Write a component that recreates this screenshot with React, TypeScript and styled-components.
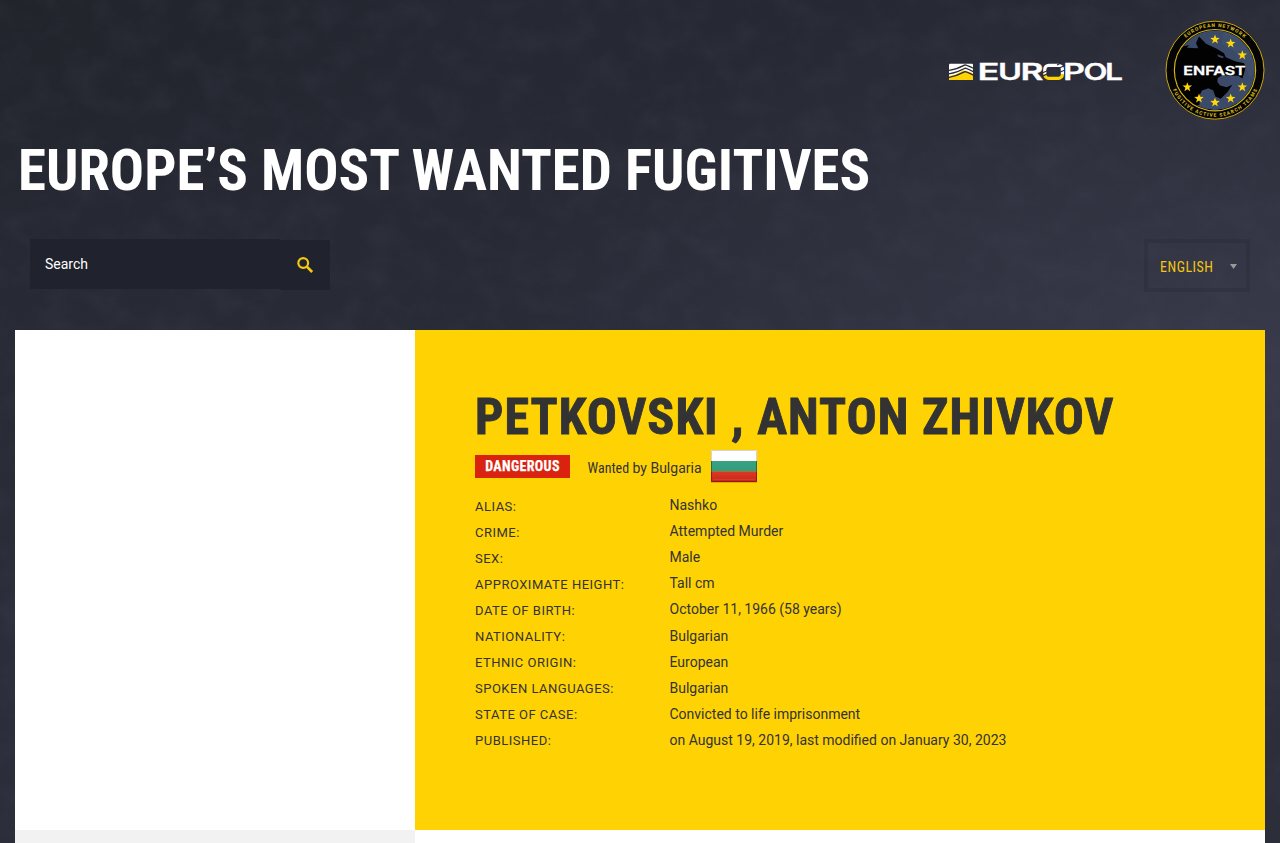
import React from "react";
import styled, { createGlobalStyle } from "styled-components";

const GlobalStyle = createGlobalStyle`
  * { box-sizing: border-box; }
  body { margin: 0; background: #282a36; font-family: Roboto, sans-serif; color: #333; overflow: hidden; }
`;

const condensed = `font-family: "Roboto Condensed", Roboto, sans-serif; font-stretch: 75%;`;

const Page = styled.div`
  position: relative;
  height: 843px;
  overflow: hidden;
  background:
    radial-gradient(ellipse 500px 260px at 0 0, rgba(31, 35, 40, 0.7), transparent),
    radial-gradient(ellipse 800px 400px at 100% 42%, rgba(62, 64, 82, 0.7), transparent),
    linear-gradient(170deg, #252732 0%, #272934 25%, #2b2d3a 60%, #2c2e3a 100%);
`;

const Texture = styled.svg`
  position: absolute;
  inset: 0;
  width: 100%;
  height: 100%;
`;

const Content = styled.div`
  position: relative;
  padding: 0 15px;
`;

const Brands = styled.div`
  display: flex;
  justify-content: flex-end;
  align-items: flex-start;
  gap: 42px;
  height: 141px;
  padding-top: 20px;
`;

const EuropolLogo = styled.svg`
  width: 175px;
  height: 32px;
  margin-top: 36px;
`;

const EnfastLogo = styled.svg`
  width: 100px;
  height: 100px;
`;

const Title = styled.h1`
  ${condensed}
  margin: 0;
  padding-left: 3px;
  height: 98px;
  font-size: 56.9px;
  line-height: 60px;
  font-weight: 700;
  color: #fff;
  white-space: nowrap;
`;

const Controls = styled.div`
  display: flex;
  justify-content: space-between;
  align-items: flex-start;
  height: 91px;
  padding: 0 15px;
`;

const SearchForm = styled.div`
  display: flex;
`;

const SearchField = styled.div`
  width: 250px;
  height: 50px;
  padding-left: 15px;
  background: #20222d;
  color: #fff;
  font-size: 14px;
  line-height: 50px;
`;

const SearchButton = styled.div`
  display: flex;
  align-items: center;
  justify-content: center;
  width: 50px;
  height: 50px;
  margin-top: 1px;
  padding-bottom: 1px;
  background: #20222d;
`;

const Language = styled.div`
  ${condensed}
  display: flex;
  align-items: center;
  justify-content: space-between;
  width: 106px;
  height: 53px;
  padding: 3px 9px 0 12px;
  border: 4px solid rgba(32, 34, 44, 0.25);
  color: #f2c611;
  font-size: 14px;
  letter-spacing: 0.5px;
`;

const Arrow = styled.svg`
  width: 7px;
  height: 5px;
  margin-top: -2px;
  fill: #999;
`;

const Profile = styled.main`
  display: grid;
  grid-template-columns: 400px 850px;
  grid-template-rows: 500px 40px;
`;

const Pane = styled.div<{ $bg: string }>`
  background: ${(p) => p.$bg};
`;

const Details = styled.section`
  padding: 60px;
  background: #ffd204;
`;

const Name = styled.h2`
  ${condensed}
  margin: 0;
  height: 58px;
  font-size: 50px;
  line-height: 55px;
  font-weight: 700;
  letter-spacing: 1.06px;
  -webkit-text-stroke: 0.9px #333;
  white-space: nowrap;
`;

const Status = styled.div`
  display: flex;
  align-items: flex-start;
  height: 45px;
`;

const Danger = styled.span`
  ${condensed}
  width: 95px;
  height: 23px;
  margin-top: 7px;
  background: #d9230f;
  color: #fff;
  font-size: 14px;
  font-weight: 700;
  letter-spacing: 0.36px;
  -webkit-text-stroke: 0.25px #fff;
  line-height: 23px;
  text-align: center;
`;

const WantedBy = styled.span`
  width: 122.5px;
  margin: 12px 0 0 17.5px;
  font-size: 14px;
  line-height: 16px;
  white-space: nowrap;
`;

const Narrow = styled.span`
  ${condensed}
`;

const Flag = styled.svg`
  width: 48px;
  height: 36px;
`;

const Facts = styled.dl`
  display: grid;
  grid-template-columns: 194.5px 1fr;
  grid-auto-rows: 26.12px;
  margin: 0;
`;

const Label = styled.dt`
  padding-top: 1.5px;
  font-size: 13px;
  line-height: 24px;
  letter-spacing: 0.5px;
  text-transform: uppercase;
  white-space: nowrap;
`;

const Value = styled.dd`
  margin: 0;
  font-size: 14px;
  line-height: 24px;
`;

const facts: [string, string][] = [
  ["Alias:", "Nashko"],
  ["Crime:", "Attempted Murder"],
  ["Sex:", "Male"],
  ["Approximate height:", "Tall cm"],
  ["Date of birth:", "October 11, 1966 (58 years)"],
  ["Nationality:", "Bulgarian"],
  ["Ethnic origin:", "European"],
  ["Spoken languages:", "Bulgarian"],
  ["State of case:", "Convicted to life imprisonment"],
  ["Published:", "on August 19, 2019, last modified on January 30, 2023"],
];

const stars = [
  [180, 86], [227, 98], [262, 133], [262, 229], [227, 263], [180, 275], [132, 263], [97, 229],
];

const STAR = "0,-15 3.6,-4.9 14.3,-4.7 5.7,1.9 8.8,12.1 0,6 -8.8,12.1 -5.7,1.9 -14.3,-4.7 -3.6,-4.9";

function Europol() {
  return (
    <EuropolLogo viewBox="0 -6 175 32">
      <defs>
        <linearGradient id="oFill" gradientUnits="userSpaceOnUse" x1="0" y1="2" x2="0" y2="18">
          <stop offset="0.6" stopColor="#fff" />
          <stop offset="0.6" stopColor="#ffd204" />
        </linearGradient>
        <clipPath id="mark"><rect x="1" y="1.7" width="24" height="16.3" rx="1" /></clipPath>
      </defs>
      <g clipPath="url(#mark)">
        <rect x="1" y="1" width="24" height="17" fill="#fff" />
        <path d="M1 14 Q9 12.8 15 8.2 Q19 8.6 25 11.5 V18 H1 Z" fill="#ffd204" />
        <g fill="none" stroke="#282a36" strokeWidth="1.3">
          <path d="M0 8.6 Q8 7.6 17 2.9 Q19 3.2 26 6.6" />
          <path d="M0 12 Q8 11 17 6.2 Q19 6.6 26 10" />
          <path d="M0 15.6 Q8 14.4 17 9.7 Q19 10 26 13.4" />
        </g>
      </g>
      <g fontFamily="Inter, sans-serif" fontWeight="600" fontSize="22.2" fill="#fff" stroke="#fff" strokeWidth="0.3">
        <text x="29.6" y="17.8" textLength="22" lengthAdjust="spacingAndGlyphs">E</text>
        <text x="50" y="17.8" textLength="24" lengthAdjust="spacingAndGlyphs">U</text>
        <text x="72.6" y="17.8" textLength="23" lengthAdjust="spacingAndGlyphs">R</text>
        <text x="115" y="17.8" textLength="22" lengthAdjust="spacingAndGlyphs">P</text>
        <text x="157" y="17.8" textLength="18" lengthAdjust="spacingAndGlyphs">L</text>
        <text x="135.5" y="17.8" textLength="24" lengthAdjust="spacingAndGlyphs">O</text>
      </g>
      <rect x="96.8" y="3.3" width="17.6" height="13.1" rx="4" fill="none" stroke="url(#oFill)" strokeWidth="3.2" />
      <path d="M93 11.5 L101 8 M94 14.5 L101 11 M109 7 L117 3.5 M110 11 L117 8 M109 3 L113 1" stroke="#282a36" strokeWidth="1.1" />
    </EuropolLogo>
  );
}

function Enfast() {
  return (
    <EnfastLogo viewBox="30 28.5 300 300">
      <defs>
        <clipPath id="disc"><circle cx="180" cy="179" r="120" /></clipPath>
        <path id="topArc" d="M50 179 A130 130 0 0 1 310 179" />
        <path id="bottomArc" d="M40 179 A140 140 0 0 0 320 179" />
      </defs>
      <circle cx="180" cy="179" r="147" fill="#050505" stroke="#c9a80c" strokeWidth="3" />
      <g clipPath="url(#disc)">
        <circle cx="180" cy="179" r="120" fill="#3a4a68" />
        <path d="M205 62 L240 72 L290 130 L302 180 L285 200 L262 150 L235 120 L200 100 Z" fill="#43546f" opacity="0.5" />
        <path
          d="M50 113 L75 109 L103 104 L95 112 L130 113 L123 98 L132 78 L153 100 L185 115 L207 128 L212 140 L240 152 L267 158 L272 168 L266 192 L262 204 L250 196 L200 194 L188 203 L187 214 L195 225 L215 230 L232 223 L217 245 L197 265 L181 258 L175 240 L160 233 L141 240 L132 258 L134 282 L90 300 L40 230 Z"
          fill="#020203"
        />
        <path d="M186 131 L207 139 L203 143 L190 139 Z" fill="#3a4a68" />
      </g>
      <circle cx="180" cy="179" r="122" fill="none" stroke="#d9b60d" strokeWidth="3.4" />
      {stars.map(([x, y]) => (
        <polygon key={`${x}-${y}`} points={STAR} transform={`translate(${x} ${y + 1})`} fill="#ffd70a" />
      ))}
      <text x="85" y="194" fontFamily="Inter, sans-serif" fontWeight="600" fontSize="36" fill="#fff" stroke="#fff" strokeWidth="1" textLength="187" lengthAdjust="spacingAndGlyphs">ENFAST</text>
      <g fontFamily="Roboto, sans-serif" fontWeight="900" fontSize="15" fill="#c9ab1e">
        <text textLength="192"><textPath href="#topArc" startOffset="50%" textAnchor="middle" textLength="192">EUROPEAN NETWORK</textPath></text>
        <text textLength="318"><textPath href="#bottomArc" startOffset="50%" textAnchor="middle" textLength="318">FUGITIVE ACTIVE SEARCH TEAMS</textPath></text>
      </g>
    </EnfastLogo>
  );
}

function BulgarianFlag() {
  return (
    <Flag viewBox="0 0 48 36">
      <defs>
        <linearGradient id="flagGreen" x1="0" y1="0" x2="0" y2="1">
          <stop offset="0" stopColor="#3aa183" /><stop offset="1" stopColor="#2f9d7b" />
        </linearGradient>
        <linearGradient id="flagRed" x1="0" y1="0" x2="0" y2="1">
          <stop offset="0" stopColor="#da3a29" /><stop offset="1" stopColor="#cb2415" />
        </linearGradient>
      </defs>
      <rect x="1" y="3" width="46" height="32" fill="#7a5a00" opacity="0.3" />
      <rect x="1" y="2" width="46" height="11" fill="#fff" />
      <rect x="1" y="13" width="46" height="10.5" fill="url(#flagGreen)" />
      <rect x="1" y="23.5" width="46" height="10.5" fill="url(#flagRed)" />
      <path d="M1.5 13V2.5H46.5V13" fill="none" stroke="#d5d5d5" />
      <path d="M1.5 13V23.5M46.5 13V23.5" stroke="#1c7054" />
      <path d="M1.5 23.5V33.5H46.5V23.5" fill="none" stroke="#8e1a10" />
      <path d="M3 31.5H45" stroke="#e4695c" opacity="0.3" />
    </Flag>
  );
}

export default function App() {
  return (
    <Page>
      <GlobalStyle />
      <Texture>
        <filter id="grain" x="0" y="0" width="100%" height="100%">
          <feTurbulence type="fractalNoise" baseFrequency="0.03 0.035" numOctaves="5" seed="21" />
          <feColorMatrix values="0 0 0 0 0.08  0 0 0 0 0.08  0 0 0 0 0.12  1.4 0 0 0 -0.55" />
        </filter>
        <rect width="100%" height="100%" filter="url(#grain)" opacity="0.22" />
      </Texture>
      <Content>
        <Brands>
          <Europol />
          <Enfast />
        </Brands>
        <Title>EUROPE’S MOST WANTED FUGITIVES</Title>
        <Controls>
          <SearchForm>
            <SearchField>Search</SearchField>
            <SearchButton>
              <svg width="18" height="18" viewBox="0 0 18 18" fill="none" stroke="#f3c814">
                <circle cx="7.2" cy="7" r="4.9" strokeWidth="2.2" />
                <path d="M10.8 10.6L16.2 16" strokeWidth="2.7" />
              </svg>
            </SearchButton>
          </SearchForm>
          <Language>
            ENGLISH
            <Arrow viewBox="0 0 7 5"><path d="M0 0H7L3.5 5Z" /></Arrow>
          </Language>
        </Controls>
        <Profile>
          <Pane $bg="#fff" />
          <Details>
            <Name>PETKOVSKI , ANTON ZHIVKOV</Name>
            <Status>
              <Danger>DANGEROUS</Danger>
              <WantedBy><Narrow>Wanted</Narrow> by Bulgaria</WantedBy>
              <BulgarianFlag />
            </Status>
            <Facts>
              {facts.map(([label, value]) => (
                <React.Fragment key={label}>
                  <Label>{label}</Label>
                  <Value>{value}</Value>
                </React.Fragment>
              ))}
            </Facts>
          </Details>
          <Pane $bg="#f2f2f2" />
          <Pane $bg="#fff" />
        </Profile>
      </Content>
    </Page>
  );
}
